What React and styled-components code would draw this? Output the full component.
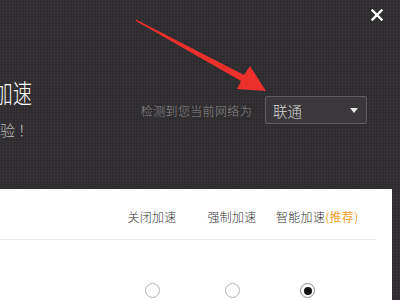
import React from "react";
import styled, { createGlobalStyle } from "styled-components";

const Global = createGlobalStyle`
  html, body { margin: 0; padding: 0; background: #2d2b2d; }
  body { font-family: "Noto Sans CJK SC", "Noto Sans", sans-serif; }
  #root { width: 400px; height: 300px; }
`;

const Page = styled.div`
  position: relative;
  width: 400px;
  height: 300px;
  overflow: hidden;
  background-color: #2d2b2d;
  background-image:
    linear-gradient(rgba(255,255,255,0.025) 1px, transparent 1px),
    linear-gradient(90deg, rgba(255,255,255,0.025) 1px, transparent 1px);
  background-size: 3px 3px;
  display: flex;
  flex-direction: column;
`;

const Hero = styled.div`
  height: 189px;
  display: flex;
  align-items: flex-start;
  flex-shrink: 0;
`;

const TitleBlock = styled.div`
  width: 300px;
  margin-left: -268px;
  margin-top: 76px;
  display: flex;
  flex-direction: column;
  align-items: flex-end;
  white-space: nowrap;
`;

const Title = styled.div`
  font-size: 26px;
  line-height: 32px;
  color: #ffffff;
  font-weight: 300;
  transform: scaleX(0.74);
  transform-origin: right center;
`;

const Subtitle = styled.div`
  margin-top: 13px;
  margin-right: -1px;
  font-size: 15px;
  line-height: 18px;
  color: #bdbdbd;
  font-weight: 300;
`;

const Bang = styled.span`
  padding-left: 3px;
`;

const NetRow = styled.div`
  margin-left: auto;
  margin-right: 33px;
  margin-top: 96px;
  display: flex;
  align-items: center;
  gap: 13px;
`;

const NetLabel = styled.span`
  font-size: 12px;
  letter-spacing: 0.35px;
  color: #8c8a8c;
  font-weight: 300;
  white-space: nowrap;
`;

const Select = styled.div`
  box-sizing: border-box;
  width: 102px;
  height: 28px;
  border: 1px solid #5f5d5f;
  border-radius: 2px;
  background: #3a383a;
  display: flex;
  align-items: center;
  justify-content: space-between;
  padding: 0 8px 0 7px;
  color: #d6d6d6;
  font-size: 14.5px;
  font-weight: 300;
`;

const Caret = styled.span`
  width: 0;
  height: 0;
  border-left: 4px solid transparent;
  border-right: 4px solid transparent;
  border-top: 5px solid #e6e6e6;
`;

const Close = styled.div`
  position: absolute;
  top: 2px;
  right: 17px;
  width: 12px;
  height: 12px;
`;

const Annotation = styled.svg`
  position: absolute;
  left: 0;
  top: 0;
  pointer-events: none;
`;

const Panel = styled.div`
  width: 392px;
  flex: 1;
  background: #ffffff;
`;

const Grid = styled.div`
  width: 376px;
  display: grid;
  grid-template-columns: 112px 80px 80px 104px;
`;

const HeaderRow = styled(Grid)`
  box-sizing: border-box;
  height: 51px;
  padding-top: 21px;
  border-bottom: 1px solid #e8e8e8;
`;

const Label = styled.div`
  grid-column: ${p => p.$col};
  justify-self: ${p => (p.$start ? "start" : "center")};
  margin-left: ${p => (p.$start ? "4px" : "0")};
  font-size: 12px;
  line-height: 14px;
  letter-spacing: 0.3px;
  color: #333333;
  font-weight: 300;
  white-space: nowrap;
`;

const Hint = styled.span`
  color: #f0a028;
  font-weight: 400;
`;

const RadioRow = styled(Grid)`
  padding-top: 43px;
`;

const Radio = styled.div`
  grid-column: ${p => p.$col};
  justify-self: ${p => (p.$offset ? "start" : "center")};
  margin-left: ${p => p.$offset || 0}px;
  box-sizing: border-box;
  width: 15px;
  height: 15px;
  border-radius: 50%;
  border: 1px solid ${p => (p.$checked ? "#8a8a8a" : "#b0b0b0")};
  display: flex;
  align-items: center;
  justify-content: center;
  &::after {
    content: "";
    display: ${p => (p.$checked ? "block" : "none")};
    width: 8px;
    height: 8px;
    border-radius: 50%;
    background: #151515;
  }
`;

export default function App() {
  return (
    <>
      <Global />
      <Page>
        <Hero>
          <TitleBlock>
            <Title>游戏加速</Title>
            <Subtitle>开启加速，享受更流畅的游戏体验<Bang>！</Bang></Subtitle>
          </TitleBlock>
          <NetRow>
            <NetLabel>检测到您当前网络为</NetLabel>
            <Select>
              <span>联通</span>
              <Caret />
            </Select>
          </NetRow>
        </Hero>
        <Panel>
          <HeaderRow>
            <Label $col={2}>关闭加速</Label>
            <Label $col={3}>强制加速</Label>
            <Label $col={4} $start>
              智能加速<Hint>(推荐)</Hint>
            </Label>
          </HeaderRow>
          <RadioRow>
            <Radio $col={2} />
            <Radio $col={3} />
            <Radio $col={4} $offset={28} $checked />
          </RadioRow>
        </Panel>
        <Close>
          <svg width="12" height="12" viewBox="0 0 12 12">
            <path d="M1.5 1.5 L10.5 10.5 M10.5 1.5 L1.5 10.5" stroke="#ffffff" strokeWidth="2.4" strokeLinecap="square" />
          </svg>
        </Close>
        <Annotation width="400" height="300" viewBox="0 0 400 300">
          <polygon
            points="136,19.5 244,75 250,66 266,91 237,89 241,81 136,21"
            fill="#ee302c"
          />
        </Annotation>
      </Page>
    </>
  );
}
